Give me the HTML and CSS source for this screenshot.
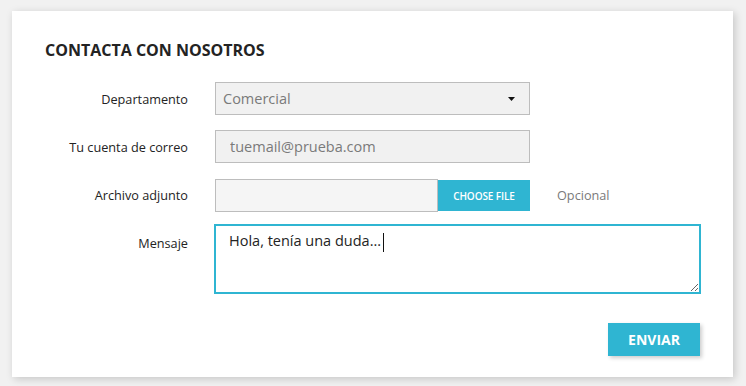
FILE: index.html
```html
<!DOCTYPE html>
<html lang="es">
<head>
<meta charset="utf-8">
<title>Contacta con nosotros</title>
<link rel="stylesheet" href="styles.css">
</head>
<body>
<section class="card">
  <h1 class="title">CONTACTA CON NOSOTROS</h1>
  <form class="form">
    <label class="label">Departamento</label>
    <div class="field select">
      <span>Comercial</span>
      <svg class="arrow" width="7" height="4" viewBox="0 0 7 4"><path d="M0 0h7L3.5 4z" fill="#111"/></svg>
    </div>
    <div class="extra"></div>

    <label class="label">Tu cuenta de correo</label>
    <input class="field email" type="text" value="tuemail@prueba.com">
    <div class="extra"></div>

    <label class="label">Archivo adjunto</label>
    <div class="file">
      <div class="file-name"></div>
      <div class="file-btn">CHOOSE FILE</div>
    </div>
    <div class="extra optional">Opcional</div>

    <label class="label label-top">Mensaje</label>
    <div class="msg-wrap">
      <textarea class="message">Hola, tenía una duda...</textarea>
      <span class="caret"></span>
    </div>
  </form>
  <div class="actions">
    <button class="send" type="button">ENVIAR</button>
  </div>
</section>
</body>
</html>
```
FILE: styles.css
```css
html, body {
  margin: 0;
  padding: 0;
}
body {
  background: #f1f1f1;
  font-family: "Open Sans", "Noto Sans", sans-serif;
  color: #232323;
  width: 746px;
  height: 386px;
  overflow: hidden;
}
.card {
  box-sizing: border-box;
  margin: 11px 0 0 12px;
  width: 721px;
  height: 366px;
  background: #fff;
  box-shadow: 2px 2px 8px rgba(0, 0, 0, 0.18);
  padding: 28px 33px 0 33px;
}
.title {
  margin: 0 0 21px 0;
  font-size: 16px;
  line-height: 22px;
  font-weight: 700;
  color: #232323;
  letter-spacing: 0;
}
.form {
  display: grid;
  grid-template-columns: 143px 315px 1fr;
  column-gap: 27px;
  grid-template-rows: 33px 33px 33px 69px;
  row-gap: 15px;
}
.label {
  font-size: 12.7px;
  text-align: right;
  align-self: center;
  color: #232323;
}
.label-top {
  align-self: start;
  padding-top: 8px;
  line-height: 18px;
}
.field {
  box-sizing: border-box;
  width: 315px;
  height: 33px;
  border: 1px solid #bdbdbd;
  background: #f1f1f1;
  font-family: inherit;
  font-size: 14.5px;
  color: #7a7a7a;
}
.select {
  display: flex;
  align-items: center;
  justify-content: space-between;
  padding: 0 14px 0 7px;
}
.arrow {
  display: block;
}
.email {
  padding: 0 0 0 14px;
  outline: none;
  margin: 0;
}
.file {
  display: flex;
  align-items: center;
  height: 33px;
  margin-top: 1px;
}
.file-name {
  box-sizing: border-box;
  width: 223px;
  height: 33px;
  border: 1px solid #bdbdbd;
  background: #f5f5f5;
}
.file-btn {
  width: 92px;
  height: 31px;
  background: #2fb5d2;
  color: #fff;
  font-size: 10px;
  font-weight: 600;
  display: flex;
  align-items: center;
  justify-content: center;
  letter-spacing: -0.1px;
}
.optional {
  align-self: center;
  font-size: 12.7px;
  color: #7a7a7a;
  margin-top: 1px;
}
.msg-wrap {
  grid-column: 2 / 4;
  position: relative;
  margin-top: -2px;
}
.message {
  box-sizing: border-box;
  display: block;
  width: 487px;
  height: 70px;
  margin: 0 0 0 -1px;
  border: 2px solid #2fb5d2;
  outline: none;
  background: #fff;
  font-family: inherit;
  font-size: 14.5px;
  line-height: 20px;
  color: #232323;
  padding: 5px 13px;
  resize: both;
}
.caret {
  position: absolute;
  left: 168px;
  top: 9px;
  width: 1px;
  height: 19px;
  background: #111;
}
.actions {
  display: flex;
  justify-content: flex-end;
  margin-top: 28px;
}
.send {
  width: 92px;
  height: 33px;
  border: none;
  background: #2fb5d2;
  color: #fff;
  font-family: inherit;
  font-size: 14px;
  font-weight: 700;
  box-shadow: 2px 2px 4px rgba(0, 0, 0, 0.2);
  padding: 0;
}
```
